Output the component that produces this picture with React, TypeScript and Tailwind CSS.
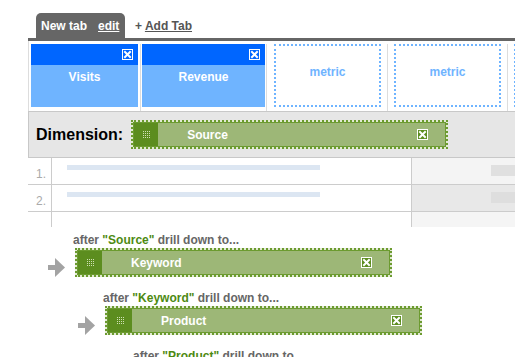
import React from 'react';

const CloseBox = ({ fill }: { fill: string }) => (
  <svg width="11" height="11" viewBox="0 0 11 11" className="shrink-0">
    <rect x="0.5" y="0.5" width="10" height="10" fill={fill} stroke="#ffffff" strokeWidth="1" />
    <path d="M3 3 L8 8 M8 3 L3 8" stroke="#ffffff" strokeWidth="2" strokeLinecap="square" />
  </svg>
);

const Grip = () => (
  <svg width="7" height="7" viewBox="0 0 7 7">
    {[0, 2, 4, 6].map((y) =>
      [0, 2, 4, 6].map((x) => <rect key={`${x}-${y}`} x={x} y={y} width="1" height="1" fill="#cfe0b4" />),
    )}
  </svg>
);

const Arrow = () => (
  <svg width="17" height="19" viewBox="0 0 17 19" className="shrink-0">
    <rect x="0" y="7" width="9" height="5" fill="#a3a3a3" />
    <polygon points="7,0 17,9.5 7,19" fill="#a3a3a3" />
  </svg>
);

const GreenPill = ({ label }: { label: string }) => (
  <div className="h-[29px] w-[317px] shrink-0 border-2 border-dotted border-[#6c9b30] bg-[#e2ead3]">
    <div className="flex h-full items-center border border-[#6c9b30] bg-[#9db777]">
      <div className="flex h-full w-[24px] items-center justify-center bg-[#5c8d1f]">
        <Grip />
      </div>
      <span className="ml-[29px] flex-1 text-[12px] font-bold text-white">{label}</span>
      <div className="mr-[17px]">
        <CloseBox fill="#5c8d1f" />
      </div>
    </div>
  </div>
);

const MetricCard = ({ label, width }: { label: string; width: string }) => (
  <div className={`flex h-[63px] flex-col bg-[#6fb4ff] ${width}`}>
    <div className="flex h-[21px] items-center justify-end bg-[#0066ff] pr-[5px]">
      <CloseBox fill="#0066ff" />
    </div>
    <div className="pt-[5px] text-center text-[12px] leading-[14px] font-bold text-white">{label}</div>
  </div>
);

const EmptyMetric = () => (
  <div className="flex h-[63px] w-[107px] items-center justify-center border-2 border-dotted border-[#6fb4ff] pb-[8px] text-[12px] font-bold text-[#6fb4ff]">
    metric
  </div>
);

const rows = [
  { n: '1.', bg: 'bg-[#f4f4f4]', chip: 'bg-[#e0e0e0]' },
  { n: '2.', bg: 'bg-[#e8e8e8]', chip: 'bg-[#dedede]' },
];

const drills = [
  { after: 'Source', label: 'Keyword' },
  { after: 'Keyword', label: 'Product' },
  { after: 'Product', label: 'Campaign' },
];

export default function App() {
  return (
    <div className="h-[357px] w-[515px] overflow-hidden bg-white pt-[13px] font-['Liberation_Sans',Arial,sans-serif]">
      <div className="flex h-[25px] items-center pl-[36px]">
        <div className="flex h-full w-[89px] items-center rounded-t-[5px] bg-[#666666] pl-[5px] text-[12px] font-bold text-white">
          <span>New tab</span>
          <span className="ml-[11px] underline">edit</span>
        </div>
        <div className="ml-[10px] text-[12px] font-bold text-[#555555]">
          + <span className="underline">Add Tab</span>
        </div>
      </div>

      <div className="ml-[28px]">
        <div className="h-[3px] bg-[#666666]" />

        <div className="flex h-[70px] border-l border-[#dddddd] pt-[3px]">
          <div className="border-r border-[#dddddd] px-[2px]">
            <MetricCard label="Visits" width="w-[107px]" />
          </div>
          <div className="border-r border-[#dddddd] pr-[1px] pl-[1px]">
            <MetricCard label="Revenue" width="w-[123px]" />
          </div>
          <div className="border-r border-[#dddddd] pr-[6px] pl-[7px]">
            <EmptyMetric />
          </div>
          <div className="border-r border-[#dddddd] px-[6px]">
            <EmptyMetric />
          </div>
          <div className="pl-[6px]">
            <EmptyMetric />
          </div>
        </div>

        <div className="flex h-[47px] items-center border-y border-l border-[#c8c8c8] bg-[#e6e6e6] pl-[7px]">
          <span className="text-[16px] font-bold text-black">Dimension:</span>
          <div className="ml-[8px]">
            <GreenPill label="Source" />
          </div>
        </div>

        {rows.map((r) => (
          <div key={r.n} className="flex h-[27px] border-b border-[#cccccc]">
            <div className="w-[24px] border-r border-[#cccccc] pt-[9px] pl-[8px] text-[12px] leading-[14px] text-[#aaaaaa]">
              {r.n}
            </div>
            <div className="w-[360px] border-r border-[#cccccc] pt-[7px] pl-[15px]">
              <div className="h-[5px] w-[253px] bg-[#dce6f2]" />
            </div>
            <div className={`flex-1 pt-[7px] ${r.bg}`}>
              <div className={`ml-[79px] h-[11px] ${r.chip}`} />
            </div>
          </div>
        ))}
        <div className="flex h-[15px]">
          <div className="w-[24px] border-r border-[#cccccc]" />
          <div className="w-[360px] border-r border-[#cccccc]" />
          <div className="flex-1 bg-[#f5f5f5]" />
        </div>
      </div>

      <div className="pt-[6px] pl-[48px]">
        {drills.map((d, i) => (
          <div key={d.label} className={`mb-[14px] ${i === 1 ? 'ml-[30px]' : i === 2 ? 'ml-[60px]' : ''}`}>
            <div className="mb-[1px] h-[14px] pl-[25px] text-[12px] leading-[14px] font-bold text-[#666666]">
              after <span className="text-[#4d8a12]">"{d.after}"</span> drill down to...
            </div>
            <div className="flex items-end gap-[10px]">
              <Arrow />
              <GreenPill label={d.label} />
            </div>
          </div>
        ))}
      </div>
    </div>
  );
}
